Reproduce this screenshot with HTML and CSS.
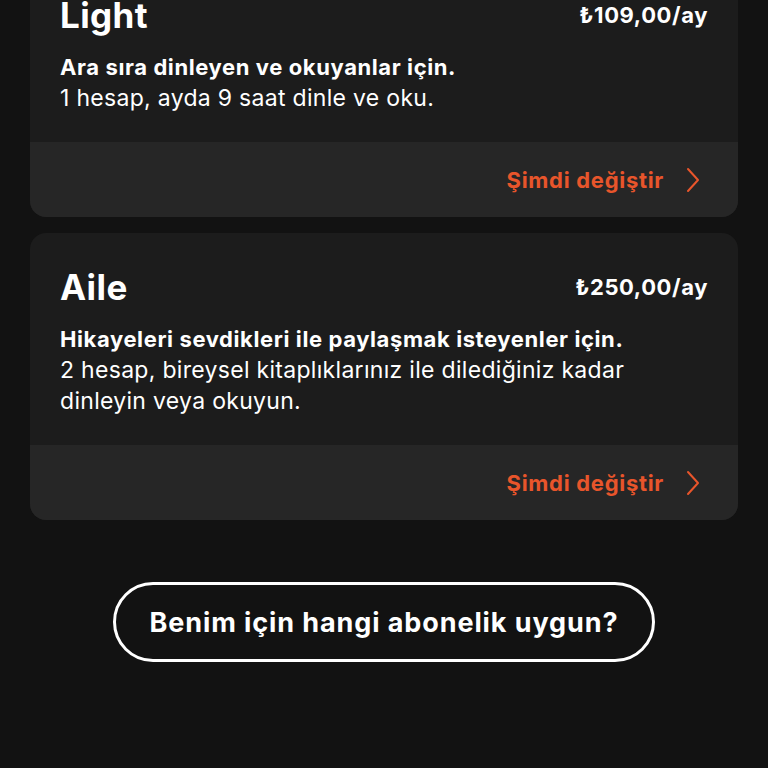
FILE: index.html
```html
<!DOCTYPE html>
<html lang="tr">
<head>
    <meta charset="UTF-8">
    <meta name="viewport" content="width=device-width, initial-scale=1.0">
    <title>Abonelikler</title>
    <link rel="stylesheet" href="styles.css">
</head>
<body>
    <div class="plans">
        <div class="plan-card">
            <div class="plan-body">
                <div class="plan-head">
                    <h2 class="plan-name">Light</h2>
                    <span class="plan-price">₺109,00/ay</span>
                </div>
                <p class="plan-lead">Ara sıra dinleyen ve okuyanlar için.</p>
                <p class="plan-desc">1 hesap, ayda 9 saat dinle ve oku.</p>
            </div>
            <a class="plan-footer" href="#">
                <span>Şimdi değiştir</span>
                <svg class="chevron" width="14" height="26" viewBox="0 0 14 26"><path d="M2 2 L12 13 L2 24" fill="none" stroke="currentColor" stroke-width="2" stroke-linecap="round" stroke-linejoin="round"/></svg>
            </a>
        </div>

        <div class="plan-card">
            <div class="plan-body">
                <div class="plan-head">
                    <h2 class="plan-name">Aile</h2>
                    <span class="plan-price">₺250,00/ay</span>
                </div>
                <p class="plan-lead">Hikayeleri sevdikleri ile paylaşmak isteyenler için.</p>
                <p class="plan-desc">2 hesap, bireysel kitaplıklarınız ile dilediğiniz kadar dinleyin veya okuyun.</p>
            </div>
            <a class="plan-footer" href="#">
                <span>Şimdi değiştir</span>
                <svg class="chevron" width="14" height="26" viewBox="0 0 14 26"><path d="M2 2 L12 13 L2 24" fill="none" stroke="currentColor" stroke-width="2" stroke-linecap="round" stroke-linejoin="round"/></svg>
            </a>
        </div>
    </div>

    <div class="help">
        <button class="help-btn">Benim için hangi abonelik uygun?</button>
    </div>
</body>
</html>
```

FILE: styles.css
```css
/* Genel */
body {
    margin: 0;
    background-color: #121212;
    color: #fff;
    font-family: Inter, "Open Sans", sans-serif;
    height: 768px;
    overflow: hidden;
}
.plans {
    margin: -39px 30px 0;
    display: flex;
    flex-direction: column;
    gap: 16px;
}
.plan-card {
    background-color: #1c1c1c;
    border-radius: 16px;
    overflow: hidden;
}
.plan-body {
    padding: 32px 30px 28px;
}
.plan-head {
    display: flex;
    justify-content: space-between;
    align-items: center;
    height: 44px;
    margin-bottom: 15px;
}
.plan-name {
    margin: 0;
    font-size: 35px;
    font-weight: 700;
    letter-spacing: 0.4px;
}
.plan-price {
    font-size: 22px;
    font-weight: 700;
    letter-spacing: 0.6px;
}
.plan-lead,
.plan-desc {
    margin: 0;
    line-height: 31px;
}
.plan-lead {
    font-size: 22px;
    font-weight: 700;
    letter-spacing: 0.6px;
}
.plan-desc {
    font-size: 23px;
    letter-spacing: 0.3px;
    padding-right: 40px;
}
.plan-footer {
    display: flex;
    justify-content: flex-end;
    align-items: center;
    gap: 22px;
    height: 75px;
    padding: 0 38px 0 30px;
    background-color: #262626;
    color: #e8552b;
    font-size: 22px;
    font-weight: 700;
    letter-spacing: 0.7px;
    text-decoration: none;
}
.help {
    display: flex;
    justify-content: center;
    margin-top: 62px;
}
.help-btn {
    width: 542px;
    height: 80px;
    border: 3px solid #fff;
    border-radius: 40px;
    background: transparent;
    color: #fff;
    font-family: inherit;
    font-size: 27px;
    font-weight: 700;
    letter-spacing: 0.9px;
}
```
